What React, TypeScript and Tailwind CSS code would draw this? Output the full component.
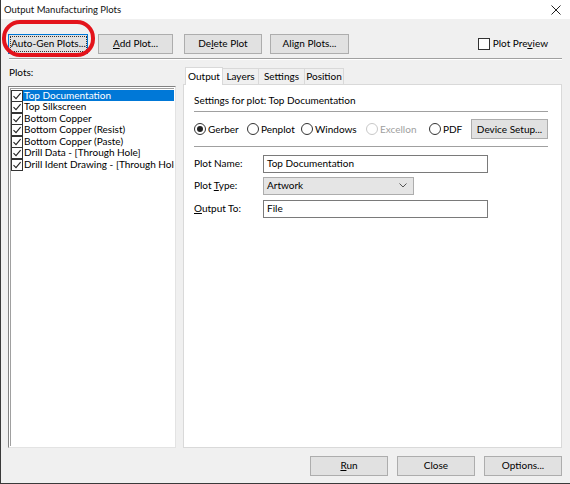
import React from "react";

const F = { fontFamily: 'Lato, "Noto Sans", sans-serif' };

function Btn({ children, className = "", w }: { children: React.ReactNode; className?: string; w: string }) {
  return (
    <div className={`h-[20px] ${w} border border-[#adadad] bg-[#e1e1e1] flex items-center justify-center text-black whitespace-nowrap shrink-0 ${className}`}>
      {children}
    </div>
  );
}

function Check({ checked }: { checked?: boolean }) {
  return (
    <span className="w-[12px] h-[12px] border border-[#333] bg-white flex items-center justify-center shrink-0">
      {checked && (
        <svg width="10" height="10" viewBox="0 0 10 10">
          <path d="M1.5 5.2 L4 7.6 L8.6 2.2" fill="none" stroke="#222" strokeWidth="1.1" />
        </svg>
      )}
    </span>
  );
}

function Radio({ checked, disabled, label, w }: { checked?: boolean; disabled?: boolean; label: string; w: string }) {
  return (
    <div className={`${w} shrink-0 flex items-center gap-[2px] whitespace-nowrap ${disabled ? "text-[#a0a0a0]" : "text-black"}`}>
      <span className={`w-[12px] h-[12px] rounded-full border ${disabled ? "border-[#c8c8c8]" : "border-[#333]"} bg-white flex items-center justify-center shrink-0`}>
        {checked && <span className="w-[6px] h-[6px] rounded-full bg-[#222]" />}
      </span>
      <span>{label}</span>
    </div>
  );
}

export default function App() {
  const items = [
    "Top Documentation",
    "Top Silkscreen",
    "Bottom Copper",
    "Bottom Copper (Resist)",
    "Bottom Copper (Paste)",
    "Drill Data - [Through Hole]",
    "Drill Ident Drawing - [Through Hole]",
  ];
  return (
    <div style={F} className="relative w-[570px] h-[484px] bg-[#f0f0f0] flex flex-col text-[10px] leading-[13px] text-black border-l border-b border-[#3a3a3a] overflow-hidden">
      {/* Title bar */}
      <div className="h-[19px] bg-white flex items-center justify-between pl-[3px] pr-[9px] shrink-0">
        <span className="text-[9.5px] text-[#111]">Output Manufacturing Plots</span>
        <svg width="10" height="10" viewBox="0 0 10 10">
          <path d="M0.5 0.5 L9.5 9.5 M9.5 0.5 L0.5 9.5" stroke="#222" strokeWidth="1" />
        </svg>
      </div>

      {/* Top buttons */}
      <div className="flex items-center pl-[7px] pr-[22px] pt-[10px] h-[39px] shrink-0">
        <div className="h-[20px] w-[80px] border border-[#0078d7] bg-[#e1e1e1] p-[1px] flex whitespace-nowrap shrink-0">
          <div className="flex-1 border border-dotted border-[#333] flex items-center justify-center">Auto-Gen Plots...</div>
        </div>
        <Btn w="w-[75px]" className="ml-[10px]"><span><u>A</u>dd Plot...</span></Btn>
        <Btn w="w-[78px]" className="ml-[11px]"><span>De<u>l</u>ete Plot</span></Btn>
        <Btn w="w-[79px]" className="ml-[8px]"><span>Align Plots...</span></Btn>
        <div className="ml-auto flex items-center gap-[3px] whitespace-nowrap">
          <Check />
          <span>Plot Pre<u>v</u>iew</span>
        </div>
      </div>

      {/* separator */}
      <div className="mx-[8px] h-0 border-t border-[#a0a0a0] border-b border-b-white shrink-0" />

      {/* Main */}
      <div className="flex flex-1 min-h-0 pl-[7px] pr-[8px] pt-[6px]">
        {/* left */}
        <div className="w-[168px] flex flex-col shrink-0">
          <div className="h-[14px] pl-[1px] flex items-center">Plots:</div>
          <div className="mt-[6px] h-[364px] bg-white border border-[#828282] border-r-[#e3e3e3] border-b-[#e3e3e3] p-[1px]">
            <div className="h-full border border-[#a0a0a0] border-r-0 border-b-0 pt-[1px] overflow-hidden">
              {items.map((t, i) => (
                <div key={t} className="h-[11.5px] flex items-center whitespace-nowrap">
                  <Check checked />
                  <span className={`leading-[11.5px] h-[11.5px] pl-[1px] pr-[1px] ${i === 0 ? "bg-[#0078d7] text-white w-[152px]" : ""}`}>{t}</span>
                </div>
              ))}
            </div>
          </div>
        </div>

        {/* right: tabs */}
        <div className="ml-[7px] flex-1 flex flex-col">
          <div className="h-[18px] flex items-end pl-[2px]">
            <div className="w-[38px] h-[18px] bg-white border border-[#d9d9d9] border-b-0 flex items-center justify-center relative z-10 -mb-[1px]">Output</div>
            <div className="w-[36px] h-[16px] bg-[#f0f0f0] border border-[#d9d9d9] border-l-0 border-b-0 flex items-center justify-center">Layers</div>
            <div className="w-[46px] h-[16px] bg-[#f0f0f0] border border-[#d9d9d9] border-l-0 border-b-0 flex items-center justify-center">Settings</div>
            <div className="w-[39px] h-[16px] bg-[#f0f0f0] border border-[#d9d9d9] border-l-0 border-b-0 flex items-center justify-center">Position</div>
          </div>
          <div className="h-[365px] bg-white border border-[#d9d9d9] pl-[10px] pr-[13px] pt-[8px]">
            <div className="h-[16px] flex items-center">Settings for plot: Top Documentation</div>
            <div className="mt-[2px] border-t border-[#a0a0a0] border-b border-b-white" />
            <div className="h-[33px] flex items-center">
              <Radio w="w-[53px]" checked label="Gerber" />
              <Radio w="w-[54px]" label="Penplot" />
              <Radio w="w-[65px]" label="Windows" />
              <Radio w="w-[63px]" disabled label="Excellon" />
              <Radio w="w-[40px]" label="PDF" />
              <Btn w="w-[77px]" className="ml-auto"><span>Device Setup...</span></Btn>
            </div>
            <div className="border-t border-[#a0a0a0] border-b border-b-white" />
            <div className="mt-[7px] flex flex-col">
              <div className="flex items-center h-[18px]">
                <span className="w-[69px]">Plot Name:</span>
                <div className="w-[225px] h-[18px] border border-[#7a7a7a] bg-white flex items-center pl-[3px]">Top Documentation</div>
              </div>
              <div className="mt-[4px] flex items-center h-[18px]">
                <span className="w-[69px]">Plot <u>T</u>ype:</span>
                <div className="w-[151px] h-[18px] border border-[#adadad] bg-[#e5e5e5] flex items-center justify-between pl-[3px] pr-[6px]">
                  <span>Artwork</span>
                  <svg width="8" height="5" viewBox="0 0 8 5"><path d="M0.5 0.5 L4 4 L7.5 0.5" fill="none" stroke="#555" strokeWidth="1" /></svg>
                </div>
              </div>
              <div className="mt-[5px] flex items-center h-[18px]">
                <span className="w-[69px]"><u>O</u>utput To:</span>
                <div className="w-[225px] h-[18px] border border-[#7a7a7a] bg-white flex items-center pl-[3px]">File</div>
              </div>
            </div>
          </div>
        </div>
      </div>

      {/* Bottom */}
      <div className="h-[35px] flex items-center justify-end pr-[8px] gap-[9px] shrink-0">
        <Btn w="w-[78px]"><span><u>R</u>un</span></Btn>
        <Btn w="w-[78px]"><span>Close</span></Btn>
        <Btn w="w-[78px]"><span>Options...</span></Btn>
      </div>

      {/* red highlight */}
      <div className="absolute left-[1px] top-[20px] w-[93px] h-[37px] border-[4px] border-[#e3131b] rounded-[18px] pointer-events-none" />
    </div>
  );
}
